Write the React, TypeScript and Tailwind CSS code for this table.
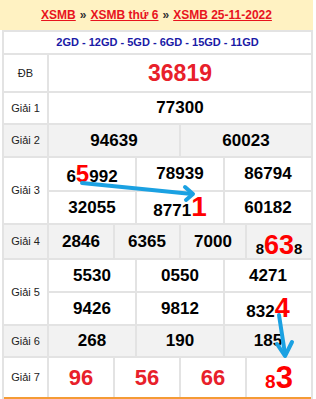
import React from "react";

const LINE = "border-[#e3e3e3]";

function Label({ text }: { text: string }) {
  return (
    <div className={`w-[45px] shrink-0 border-r-2 ${LINE} flex items-center justify-center text-[11px] text-[#222]`}>
      {text}
    </div>
  );
}

function Cells({ items, className = "" }: { items: React.ReactNode[]; className?: string }) {
  return (
    <div className={`flex flex-1 ${className}`}>
      {items.map((it, i) => (
        <div
          key={i}
          className={`flex-1 flex items-center justify-center font-bold text-[17px] text-black ${i > 0 ? `border-l-2 ${LINE}` : ""}`}
        >
          {it}
        </div>
      ))}
    </div>
  );
}

const Red = ({ children, size }: { children: React.ReactNode; size: string }) => (
  <span className={`text-[#ff0000] leading-none ${size}`}>{children}</span>
);

export default function App() {
  return (
    <div className="relative w-[316px] h-[399px] bg-white font-['Liberation_Sans',Arial,sans-serif] overflow-hidden">
      {/* header links */}
      <div className="w-[313px] h-[30px] bg-[#fff2c2] flex items-center justify-center gap-[4px] text-[12px] font-bold">
        <span className="text-[#e8141e] underline">XSMB</span>
        <span className="text-[#333]">»</span>
        <span className="text-[#e8141e] underline">XSMB thứ 6</span>
        <span className="text-[#333]">»</span>
        <span className="text-[#e8141e] underline">XSMB 25-11-2022</span>
      </div>

      {/* result table */}
      <div className={`ml-[2px] w-[311px] border-t-2 border-x-2 ${LINE}`}>
        <div className={`h-[23px] border-b-2 ${LINE} flex items-center justify-center text-[11px] font-bold text-[#1a1aa6]`}>
          2GD - 12GD - 5GD - 6GD - 15GD - 11GD
        </div>

        <div className={`flex h-[38px] border-b-2 ${LINE}`}>
          <Label text="ĐB" />
          <div className="flex-1 flex items-center justify-center font-bold text-[23px] text-[#e8202a]">36819</div>
        </div>

        <div className={`flex h-[32px] border-b-2 ${LINE}`}>
          <Label text="Giải 1" />
          <Cells items={["77300"]} />
        </div>

        <div className={`flex h-[33px] border-b-2 ${LINE} bg-[#f2f2f2]`}>
          <Label text="Giải 2" />
          <Cells items={["94639", "60023"]} />
        </div>

        <div className={`flex h-[67px] border-b-2 ${LINE}`}>
          <Label text="Giải 3" />
          <div className="flex-1 flex flex-col">
            <Cells
              className={`border-b-2 ${LINE}`}
              items={[
                <span key="a" className="leading-none">
                  6<Red size="text-[24px]">5</Red>992
                </span>,
                "78939",
                "86794",
              ]}
            />
            <Cells
              items={[
                "32055",
                <span key="b" className="leading-none">
                  8771<Red size="text-[28px]">1</Red>
                </span>,
                "60182",
              ]}
            />
          </div>
        </div>

        <div className={`flex h-[35px] border-b-2 ${LINE} bg-[#f2f2f2]`}>
          <Label text="Giải 4" />
          <Cells
            items={[
              "2846",
              "6365",
              "7000",
              <span key="c" className="leading-none pt-[8px]">
                <span className="text-[15px]">8</span>
                <Red size="text-[27px]">63</Red>
                <span className="text-[15px]">8</span>
              </span>,
            ]}
          />
        </div>

        <div className={`flex h-[66px] border-b-2 ${LINE}`}>
          <Label text="Giải 5" />
          <div className="flex-1 flex flex-col">
            <Cells className={`border-b-2 ${LINE}`} items={["5530", "0550", "4271"]} />
            <Cells
              items={[
                "9426",
                "9812",
                <span key="d" className="leading-none">
                  832<Red size="text-[27px]">4</Red>
                </span>,
              ]}
            />
          </div>
        </div>

        <div className={`flex h-[32px] border-b-2 ${LINE} bg-[#f2f2f2]`}>
          <Label text="Giải 6" />
          <Cells items={["268", "190", "185"]} />
        </div>

        <div className="flex h-[41px] border-b-2 border-b-[#f59b35]">
          <Label text="Giải 7" />
          <Cells
            items={[
              <span key="e" className="text-[22px] text-[#e8202a]">96</span>,
              <span key="f" className="text-[22px] text-[#e8202a]">56</span>,
              <span key="g" className="text-[22px] text-[#e8202a]">66</span>,
              <span key="h" className="leading-none text-[#ff0000]">
                <span className="text-[19px]">8</span>
                <span className="text-[31px]">3</span>
              </span>,
            ]}
          />
        </div>
      </div>

      {/* blue annotation arrows */}
      <svg className="absolute left-0 top-0 pointer-events-none" width="316" height="399">
        <g stroke="#1ba1e2" strokeWidth="4" strokeLinecap="round" strokeLinejoin="round" fill="none">
          <path d="M82 183 L192 194" />
          <path d="M185 187 L193 194 L186 200" />
          <path d="M279 315 L285 354" />
          <path d="M277 344 L285 356 L292 342" />
        </g>
      </svg>
    </div>
  );
}
